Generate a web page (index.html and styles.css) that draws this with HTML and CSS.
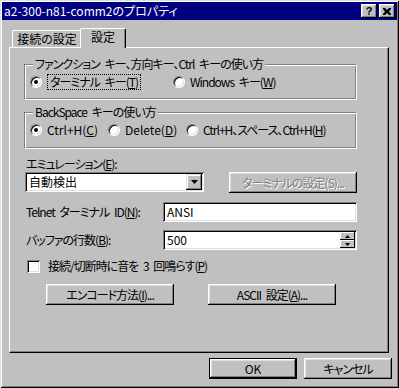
FILE: index.html
```html
<!DOCTYPE html>
<html lang="ja">
<head>
  <meta charset="UTF-8">
  <title>a2-300-n81-comm2のプロパティ</title>
  <link rel="stylesheet" href="styles.css">
</head>
<body>
  <div class="window">
    <div class="titlebar">
      <span class="title">a2-300-n81-comm2のプロパティ</span>
      <span class="title-buttons">
        <span class="tbtn tbtn-help">?</span>
        <span class="tbtn tbtn-close">
          <svg width="8" height="7" viewBox="0 0 8 7"><path d="M0 0h2l2 2 2-2h2v1l-2 2.5 2 2.5v1h-2l-2-2-2 2h-2v-1l2-2.5-2-2.5z" fill="#000"/></svg>
        </span>
      </span>
    </div>

    <div class="tabs">
      <div class="tab">接続の設定</div>
      <div class="tab tab-active">設定</div>
    </div>

    <div class="panel">
      <fieldset class="group">
        <legend>ファンクション キー、方向キー、Ctrl キーの使い方</legend>
        <div class="radio-row">
          <label class="option option-wide"><span class="radio checked"></span><span class="focus">ターミナル キー(<u>T</u>)</span></label>
          <label class="option"><span class="radio"></span><span>Windows キー(<u>W</u>)</span></label>
        </div>
      </fieldset>

      <fieldset class="group group-second">
        <legend>BackSpace キーの使い方</legend>
        <div class="radio-row">
          <label class="option option-short"><span class="radio checked"></span><span class="latin">Ctrl+H(<u>C</u>)</span></label>
          <label class="option option-short"><span class="radio"></span><span class="latin">Delete(<u>D</u>)</span></label>
          <label class="option"><span class="radio"></span><span>Ctrl+H、スペース、Ctrl+H(<u>H</u>)</span></label>
        </div>
      </fieldset>

      <div class="field-label">エミュレーション(<u>E</u>):</div>
      <div class="combo-row">
        <div class="combo">
          <span class="combo-text">自動検出</span>
          <span class="combo-arrow"><svg width="7" height="4" viewBox="0 0 7 4"><path d="M0 0h7l-3.5 4z" fill="#000"/></svg></span>
        </div>
        <button class="btn btn-disabled" disabled>ターミナルの設定(S)...</button>
      </div>

      <div class="input-row">
        <span class="row-label">Telnet ターミナル ID(<u>N</u>):</span>
        <div class="edit latin">ANSI</div>
      </div>

      <div class="input-row input-row-buffer">
        <span class="row-label">バッファの行数(<u>B</u>):</span>
        <div class="edit edit-spin latin">
          <span>500</span>
          <span class="spin">
            <span class="spin-btn"><svg width="5" height="3" viewBox="0 0 5 3"><path d="M0 3h5l-2.5-3z" fill="#000"/></svg></span>
            <span class="spin-btn"><svg width="5" height="3" viewBox="0 0 5 3"><path d="M0 0h5l-2.5 3z" fill="#000"/></svg></span>
          </span>
        </div>
      </div>

      <label class="check-row"><span class="checkbox"></span><span>接続/切断時に音を 3 回鳴らす(<u>P</u>)</span></label>

      <div class="button-row">
        <button class="btn">エンコード方法(<u>I</u>)...</button>
        <button class="btn">ASCII 設定(<u>A</u>)...</button>
      </div>
    </div>

    <div class="footer">
      <button class="btn btn-default latin">OK</button>
      <button class="btn">キャンセル</button>
    </div>
  </div>
</body>
</html>
```

FILE: styles.css
```css
* {
  box-sizing: border-box;
}
body {
  margin: 0;
  font-family: "Noto Sans CJK JP", "DejaVu Sans", sans-serif;
  font-size: 12px;
  line-height: 14px;
  font-feature-settings: "palt";
  letter-spacing: -1px;
  word-spacing: 3px;
  color: #000;
  background-color: #c0c0c0;
}
u {
  text-underline-offset: 1px;
}
.latin {
  letter-spacing: 0;
}
.window {
  width: 399px;
  height: 388px;
  padding: 2px;
  background-color: #c0c0c0;
  box-shadow: inset 1px 1px #dfdfdf, inset -1px -1px #000, inset 2px 2px #fff, inset -2px -2px #808080;
}
.titlebar {
  height: 18px;
  background-color: #000080;
  color: #fff;
  display: flex;
  align-items: center;
  justify-content: space-between;
  padding: 0 2px 0 2px;
}
.title {
  line-height: 18px;
  letter-spacing: 0;
}
.title-buttons {
  display: flex;
  gap: 2px;
}
.tbtn {
  width: 16px;
  height: 14px;
  background-color: #c0c0c0;
  color: #000;
  display: flex;
  align-items: center;
  justify-content: center;
  font-family: "Liberation Sans", sans-serif;
  font-weight: bold;
  font-size: 11px;
  letter-spacing: 0;
  box-shadow: inset -1px -1px #000, inset 1px 1px #fff, inset -2px -2px #808080, inset 2px 2px #dfdfdf;
}
.tbtn-help {
  padding-bottom: 1px;
}
.tbtn-close svg {
  margin-left: -1px;
}

.tabs {
  display: flex;
  align-items: flex-end;
  height: 20px;
  margin: 8px 0 -1px 7px;
  padding-left: 3px;
  position: relative;
  z-index: 1;
}
.tab {
  height: 17px;
  width: 70px;
  text-align: center;
  line-height: 16px;
  letter-spacing: 0;
  background-color: #c0c0c0;
  border-top: 1px solid #fff;
  border-left: 1px solid #fff;
  border-right: 1px solid #000;
  border-radius: 2px 2px 0 0;
  box-shadow: inset -1px 0 #808080;
  margin-bottom: 1px;
}
.tab-active {
  width: 46px;
  height: 20px;
  margin-left: -2px;
  margin-bottom: 0;
  line-height: 15px;
  padding-bottom: 4px;
}

.panel {
  width: 380px;
  height: 306px;
  margin-left: 7px;
  padding: 0 31px 0 14px;
  border-top: 1px solid #fff;
  border-left: 1px solid #fff;
  border-right: 1px solid #000;
  border-bottom: 1px solid #000;
  box-shadow: inset -1px -1px #808080;
}

.group {
  margin: 9px 0 0 0;
  padding: 2px 5px 8px 5px;
  border: 1px solid;
  border-color: #808080 #fff #fff #808080;
  box-shadow: inset 1px 1px #fff, inset -1px -1px #808080;
  min-width: 0;
}
.group-second {
  margin-top: 5px;
  padding-bottom: 9px;
}
.group legend {
  margin-left: 3px;
  padding: 0 2px;
  background-color: #c0c0c0;
  line-height: 14px;
}
.radio-row {
  display: flex;
  height: 18px;
  align-items: center;
}
.option {
  display: flex;
  align-items: center;
  gap: 5px;
  white-space: nowrap;
}
.option-wide {
  width: 143px;
}
.option-short {
  width: 78px;
}
.radio {
  width: 12px;
  height: 12px;
  border-radius: 50%;
  background-color: #fff;
  border: 1px solid;
  border-color: #808080 #fff #fff #808080;
  box-shadow: inset 1px 1px #000, inset -1px -1px #dfdfdf;
  position: relative;
  flex: none;
}
.radio.checked::after {
  content: "";
  position: absolute;
  left: 3px;
  top: 3px;
  width: 4px;
  height: 4px;
  border-radius: 50%;
  background-color: #000;
}
.focus {
  outline: 1px dotted #000;
  padding: 0 2px;
  margin-left: 1px;
}

.field-label {
  margin: 8px 0 0 2px;
}
.combo-row {
  display: flex;
  justify-content: space-between;
  align-items: flex-start;
  margin-top: 1px;
}
.combo {
  width: 179px;
  height: 20px;
  margin-left: 1px;
  background-color: #fff;
  display: flex;
  align-items: center;
  justify-content: space-between;
  padding: 2px;
  letter-spacing: 0;
  box-shadow: inset 1px 1px #808080, inset -1px -1px #fff, inset 2px 2px #000, inset -2px -2px #dfdfdf;
}
.combo-text {
  padding-left: 2px;
}
.combo-arrow {
  width: 16px;
  height: 16px;
  background-color: #c0c0c0;
  display: flex;
  align-items: center;
  justify-content: center;
  box-shadow: inset -1px -1px #000, inset 1px 1px #dfdfdf, inset -2px -2px #808080, inset 2px 2px #fff;
}

.btn {
  font: inherit;
  font-feature-settings: "palt";
  letter-spacing: -1px;
  word-spacing: 3px;
  color: #000;
  width: 128px;
  height: 21px;
  padding: 0;
  border: none;
  background-color: #c0c0c0;
  box-shadow: inset -1px -1px #000, inset 1px 1px #fff, inset -2px -2px #808080, inset 2px 2px #dfdfdf;
}
.btn.latin {
  letter-spacing: 0;
}
.btn-disabled {
  color: #808080;
  text-shadow: 1px 1px #fff;
}
.btn-default {
  border: 1px solid #000;
}

.input-row {
  display: flex;
  justify-content: space-between;
  align-items: center;
  margin: 9px 0 0 2px;
}
.input-row-buffer {
  margin-top: 8px;
}
.edit {
  width: 194px;
  height: 20px;
  background-color: #fff;
  padding: 3px 4px;
  box-shadow: inset 1px 1px #808080, inset -1px -1px #fff, inset 2px 2px #000, inset -2px -2px #dfdfdf;
}
.edit-spin {
  display: flex;
  justify-content: space-between;
  align-items: center;
  padding: 2px 2px 2px 4px;
}
.spin {
  display: flex;
  flex-direction: column;
  width: 15px;
  height: 16px;
}
.spin-btn {
  flex: 1;
  display: flex;
  align-items: center;
  justify-content: center;
  background-color: #c0c0c0;
  box-shadow: inset -1px -1px #000, inset 1px 1px #fff;
}

.check-row {
  display: flex;
  align-items: center;
  gap: 8px;
  height: 16px;
  margin: 8px 0 0 3px;
}
.checkbox {
  width: 13px;
  height: 13px;
  background-color: #fff;
  box-shadow: inset 1px 1px #808080, inset -1px -1px #fff, inset 2px 2px #000, inset -2px -2px #dfdfdf;
}

.button-row {
  display: flex;
  gap: 34px;
  margin: 10px 0 0 22px;
}

.footer {
  display: flex;
  justify-content: flex-end;
  gap: 7px;
  margin-top: 5px;
  padding-right: 5px;
}
.footer .btn {
  width: 88px;
}
```
